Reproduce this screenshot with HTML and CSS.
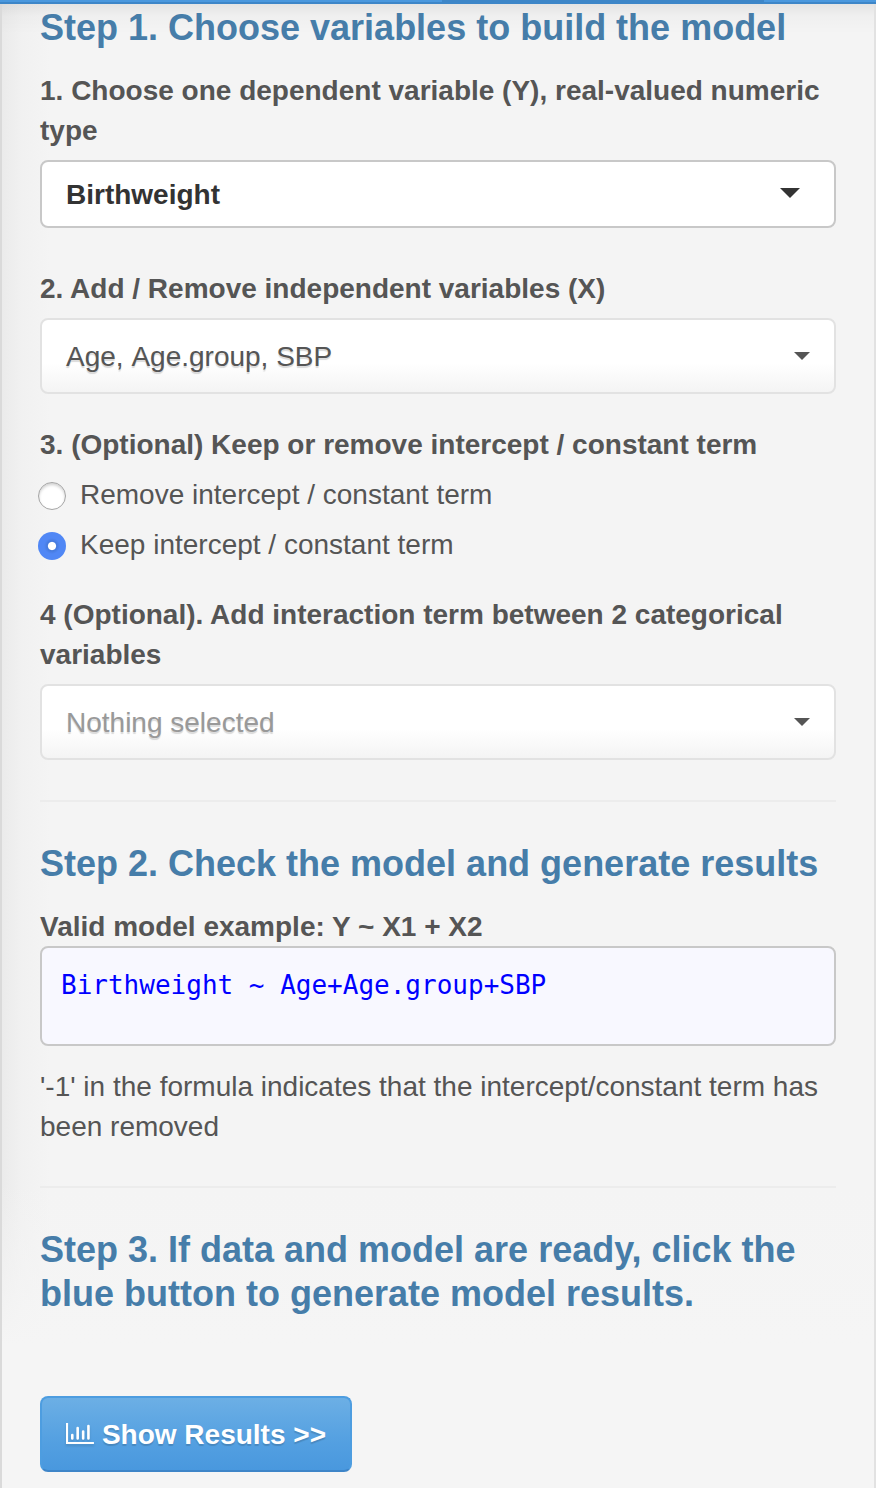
FILE: index.html
```html
<!DOCTYPE html>
<html lang="en">
<head>
<meta charset="utf-8">
<title>Model builder</title>
<link rel="stylesheet" href="styles.css">
</head>
<body>
<div class="tabs"><i class="tab"></i><i class="tab active"></i></div>
<main class="panel">
  <h4>Step 1. Choose variables to build the model</h4>
  <section class="field first">
    <b class="label">1. Choose one dependent variable (Y), real-valued numeric<br>type</b>
    <div class="select solid"><span>Birthweight</span><i class="caret big"></i></div>
  </section>
  <section class="field second">
    <b class="label">2. Add / Remove independent variables (X)</b>
    <div class="select picker"><span>Age, Age.group, SBP</span><i class="caret"></i></div>
  </section>
  <section class="radios">
    <b class="label">3. (Optional) Keep or remove intercept / constant term</b>
    <label class="radio"><i class="dot"></i><span>Remove intercept / constant term</span></label>
    <label class="radio"><i class="dot on"></i><span>Keep intercept / constant term</span></label>
  </section>
  <section class="field third">
    <b class="label">4 (Optional). Add interaction term between 2 categorical<br>variables</b>
    <div class="select picker empty"><span>Nothing selected</span><i class="caret"></i></div>
  </section>
  <hr class="rule">
  <h4>Step 2. Check the model and generate results</h4>
  <b class="label valid">Valid model example: Y ~ X1 + X2</b>
  <pre class="formula">Birthweight ~ Age+Age.group+SBP</pre>
  <p class="note">'-1' in the formula indicates that the intercept/constant term has<br>been removed</p>
  <hr class="rule">
  <h4>Step 3. If data and model are ready, click the<br>blue button to generate model results.</h4>
  <button class="go"><svg class="chart" viewBox="0 0 28 22" width="28" height="22"><path d="M1 0V20H28" fill="none" stroke="#fff" stroke-width="2.2"/><path d="M6.3 12V15.5M11.7 5V15.5M17.2 8.5V15.5M22.5 3V15.5" fill="none" stroke="#fff" stroke-width="2.6" stroke-linecap="round"/></svg><span>Show Results &gt;&gt;</span></button>
</main>
</body>
</html>
```
FILE: styles.css
```css
* { box-sizing: border-box; }
body {
  margin: 0;
  height: 1488px;
  overflow: hidden;
  background: #f4f4f4;
  color: #555;
  font: 28px/40px "Liberation Sans", Arial, sans-serif;
  white-space: nowrap;
}
.tabs { display: flex; height: 4px; border-bottom: 2px solid #3d86c8; background: #4a98de; }
.tab { flex: none; width: 442px; height: 2px; }
.tab.active { width: 322px; background: #3d86c8; }
.panel {
  height: 1484px;
  padding: 2px 38px 0;
  border-left: 2px solid #dadada;
  border-right: 2px solid #e2e2e2;
  background:
    linear-gradient(rgba(0, 0, 0, .065), rgba(0, 0, 0, .02) 12px, transparent 30px),
    linear-gradient(transparent 1180px, #f5f5f5 1340px),
    linear-gradient(90deg, #ebebeb, #f1f1f1 20px, #f4f4f4 48px);
}
h4 { margin: 0; font-size: 36px; line-height: 44px; color: #467da9; }
.label { display: block; }
.first { margin-top: 21px; }
.second { margin-top: 41px; }
.radios { margin-top: 31px; }
.third { margin-top: 30px; }
.select {
  display: flex;
  align-items: center;
  justify-content: space-between;
  margin-top: 9px;
  padding: 0 24px;
  border: 2px solid #e2e2e2;
  border-radius: 8px;
  background: #fff;
}
.select span, .go span { padding-top: 2px; }
.solid { height: 68px; padding-right: 34px; border-color: #c8c8c8; color: #333; font-weight: bold; }
.picker {
  height: 76px;
  background: linear-gradient(#fff 60%, #f4f4f4);
  text-shadow: 0 2px 1px rgba(0, 0, 0, .15);
  font-kerning: none;
}
.empty span { color: #999; }
.caret { border: 8px solid transparent; border-top-color: #555; border-bottom: 0; margin-top: -1px; }
.caret.big { border-width: 10px 10px 0; border-top-color: #333; margin-top: -2px; }
.radio { display: flex; align-items: center; gap: 14px; margin: 10px 0 0 -2px; height: 40px; }
.dot {
  width: 28px;
  height: 28px;
  margin-top: 2px;
  border: 1px solid #a5a5a5;
  border-radius: 50%;
  background: #fff;
  box-shadow: inset 0 2px 3px rgba(0, 0, 0, .18);
}
.dot.on {
  border: 0;
  box-shadow: none;
  background: radial-gradient(circle, #fff 3.6px, #4579dc 4.6px, #5087f5 8px);
}
.rule { margin: 40px 0; border: 0; height: 2px; background: #ececec; }
.valid { margin: 21px 0 -1px; }
.formula {
  height: 100px;
  margin: 0;
  padding: 17px 19px;
  border: 2px solid #c8c8c8;
  border-radius: 8px;
  background: #f8f8ff;
  color: #00f;
  font: 26px/40px "DejaVu Sans Mono", monospace;
}
.note { margin: 21px 0 39px; }
.note + .rule { margin-top: 0; }
.go {
  display: flex;
  align-items: center;
  gap: 8px;
  width: 312px;
  height: 76px;
  margin-top: 80px;
  padding: 0 24px;
  border: 2px solid #4d9de0;
  border-bottom-color: #3e85c8;
  border-radius: 8px;
  background: linear-gradient(#6cafe5, #54a0e1 60%, #4998de);
  color: #fff;
  font: bold 28px/40px "Liberation Sans", Arial, sans-serif;
  text-shadow: 0 2px 1px rgba(0, 0, 0, .15);
}
.chart { filter: drop-shadow(0 2px 1px rgba(0, 0, 0, .13)); }
```
